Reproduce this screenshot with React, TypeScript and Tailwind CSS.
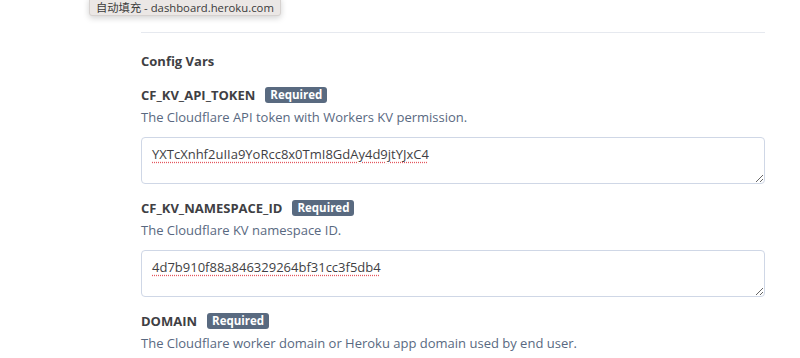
const font = { fontFamily: '"Open Sans", "Noto Sans CJK SC", sans-serif' };

interface IConfigVarProps {
  name: string;
  description: string;
  value?: string;
}

const ConfigVar = ({ name, description, value }: IConfigVarProps) => {
  return (
    <div className="flex flex-col">
      <div className="flex items-center h-[22px] gap-[10px]">
        <span className="text-[13px] font-bold text-[#3f3f44] leading-none">{name}</span>
        <span className="bg-[#596a80] text-white text-[11.5px] font-bold leading-none rounded-[3px] px-[5px] py-[2px]">
          Required
        </span>
      </div>
      <p className="text-[13px] text-[#596981] leading-[22px]">{description}</p>
      {value !== undefined && (
        <textarea
          spellCheck={false}
          readOnly
          defaultValue={value}
          className="mt-[9px] w-full h-[47px] border border-[#cfd7e6] rounded-[4px] px-[10px] py-[7px] text-[13px] text-[#3f3f44] leading-[18px] underline decoration-dotted decoration-[#e4565e] underline-offset-[3px] outline-none"
          style={font}
        />
      )}
    </div>
  );
};

export default function App() {
  return (
    <div className="relative w-[800px] h-[358px] bg-white overflow-hidden" style={font}>
      <div className="absolute left-[89px] top-[-3px] h-[19px] px-[6px] pt-[1px] flex items-center bg-[#ebe7e5] border border-[#d6d2d0] rounded-[3px] shadow-[0_2px_6px_rgba(0,0,0,0.18)] text-[11.3px] leading-[13px] text-[#3a3a3a] whitespace-nowrap">
        自动填充 - dashboard.heroku.com
      </div>
      <div className="ml-[141px] w-[624px] pt-[32px]">
        <div className="border-t border-[#e6e9ef]" />
        <h3 className="mt-[19px] text-[13px] font-bold text-[#3f3f44] leading-[18px]">Config Vars</h3>
        <div className="mt-[14px] flex flex-col gap-[13px]">
          <ConfigVar
            name="CF_KV_API_TOKEN"
            description="The Cloudflare API token with Workers KV permission."
            value="YXTcXnhf2uIIa9YoRcc8x0TmI8GdAy4d9jtYJxC4"
          />
          <ConfigVar
            name="CF_KV_NAMESPACE_ID"
            description="The Cloudflare KV namespace ID."
            value="4d7b910f88a846329264bf31cc3f5db4"
          />
          <ConfigVar
            name="DOMAIN"
            description="The Cloudflare worker domain or Heroku app domain used by end user."
          />
        </div>
      </div>
    </div>
  );
}
